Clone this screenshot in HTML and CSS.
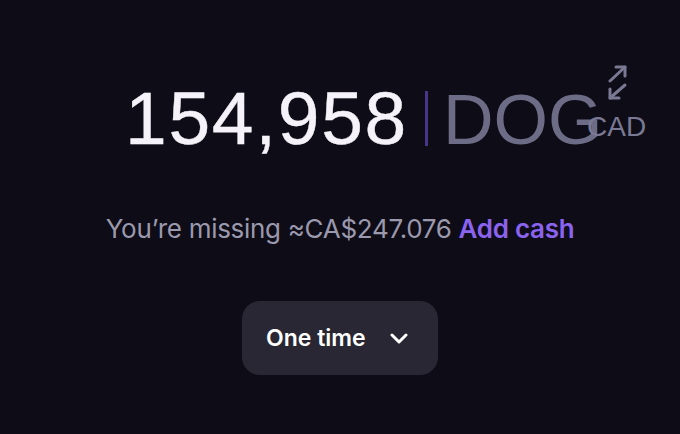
FILE: index.html
```html
<!DOCTYPE html>
<html>
<head>
<meta charset="utf-8">
<link rel="stylesheet" href="styles.css">
</head>
<body>
<main class="page">
  <div class="amount-row">
    <span class="amount">154,958</span>
    <span class="divider"></span>
    <span class="ticker">DOG</span>
    <svg class="switch-icon" width="24" height="36" viewBox="0 0 24 36" fill="none" stroke="currentColor" stroke-width="3" stroke-linecap="round" stroke-linejoin="round">
      <path d="M5 16 L20 2"/>
      <path d="M11 2 H20 V11"/>
      <path d="M20 20 L5 33"/>
      <path d="M5 24 V33 H14"/>
    </svg>
    <span class="switch-label">CAD</span>
  </div>
  <p class="missing">You’re missing ≈CA$247.076 <a class="add-cash" href="#">Add cash</a></p>
  <button class="freq">
    <span>One time</span>
    <svg width="18" height="11" viewBox="0 0 18 11" fill="none" stroke="currentColor" stroke-width="3" stroke-linecap="round" stroke-linejoin="round"><path d="M2 2 L9 9 L16 2"/></svg>
  </button>
</main>
</body>
</html>
```
FILE: styles.css
```css
html, body {
  margin: 0;
  padding: 0;
  background: #0e0c16;
}
body {
  width: 680px;
  height: 434px;
  overflow: hidden;
  font-family: Inter, "Liberation Sans", sans-serif;
}
.page {
  display: flex;
  flex-direction: column;
  align-items: center;
}
.amount-row {
  position: relative;
  align-self: flex-start;
  display: flex;
  align-items: baseline;
  margin-top: 81px;
  padding-left: 125px;
  font-family: "Liberation Sans", Arial, sans-serif;
  line-height: 1;
}
.amount {
  font-size: 75px;
  letter-spacing: 1.7px;
  color: #f5f3f9;
  -webkit-text-stroke: 0.4px #f5f3f9;
}
.divider {
  align-self: center;
  width: 3px;
  height: 55px;
  margin: 0 15px 0 17px;
  background: #47358a;
}
.ticker {
  font-size: 70px;
  color: #6d6c86;
}
.switch-icon {
  position: absolute;
  left: 605px;
  top: -16px;
  color: #7a7994;
}
.switch-label {
  position: absolute;
  left: 587px;
  top: 32px;
  font-size: 28px;
  line-height: 1;
  color: #7a7994;
}
.missing {
  margin: 58px 0 0;
  font-size: 26px;
  line-height: 30px;
  color: #9b99ad;
  letter-spacing: -0.3px;
}
.add-cash {
  color: #8a63ef;
  font-weight: 600;
  text-decoration: none;
}
.freq {
  margin-top: 57px;
  width: 196px;
  height: 74px;
  display: flex;
  align-items: center;
  justify-content: flex-start;
  gap: 24px;
  border: none;
  border-radius: 18px;
  background: #282733;
  color: #ffffff;
  font-family: Inter, sans-serif;
  font-size: 23px;
  font-weight: 600;
  padding: 0 0 0 24px;
}
```
